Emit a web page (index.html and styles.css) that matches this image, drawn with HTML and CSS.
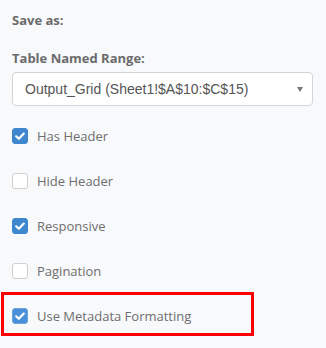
FILE: index.html
```html
<!DOCTYPE html>
<html>
<head>
<meta charset="utf-8">
<link rel="stylesheet" href="styles.css">
</head>
<body>
<div class="panel">
  <div class="heading save">Save as:</div>
  <div class="heading range">Table Named Range:</div>
  <div class="select">
    <span class="select-text">Output_Grid (Sheet1!$A$10:$C$15)</span>
    <span class="caret"></span>
  </div>
  <div class="options">
    <div class="row"><span class="box checked"><svg viewBox="0 0 16 16" width="16" height="16"><path d="M4.2 8.3 L6.8 10.8 L11.8 5.6" fill="none" stroke="#fff" stroke-width="2.2" stroke-linecap="round" stroke-linejoin="round"/></svg></span><span class="label">Has Header</span></div>
    <div class="row"><span class="box"></span><span class="label">Hide Header</span></div>
    <div class="row"><span class="box checked"><svg viewBox="0 0 16 16" width="16" height="16"><path d="M4.2 8.3 L6.8 10.8 L11.8 5.6" fill="none" stroke="#fff" stroke-width="2.2" stroke-linecap="round" stroke-linejoin="round"/></svg></span><span class="label">Responsive</span></div>
    <div class="row"><span class="box"></span><span class="label">Pagination</span></div>
  </div>
  <div class="highlight">
    <div class="row hl-row"><span class="box checked light"><svg viewBox="0 0 16 16" width="16" height="16"><path d="M4.2 8.3 L6.8 10.8 L11.8 5.6" fill="none" stroke="#fff" stroke-width="2.2" stroke-linecap="round" stroke-linejoin="round"/></svg></span><span class="label">Use Metadata Formatting</span></div>
  </div>
</div>
</body>
</html>
```
FILE: styles.css
```css
html, body {
  margin: 0;
  padding: 0;
  background: #f8f9fb;
}
body {
  width: 326px;
  height: 348px;
  overflow: hidden;
  font-family: "Open Sans", "Liberation Sans", sans-serif;
}
.panel {
  padding: 11px 13px 0 12px;
}
.heading {
  font-size: 13px;
  line-height: 18px;
  font-weight: 700;
  color: #6b6b6b;
}
.range {
  margin-top: 20px;
}
.select {
  margin-top: 5px;
  height: 32px;
  border: 1px solid #d4d4d4;
  border-radius: 4px;
  background: #fff;
  display: flex;
  align-items: center;
  justify-content: space-between;
  padding: 0 9px 0 12px;
}
.select-text {
  font-family: "Liberation Sans", Arial, sans-serif;
  font-size: 14px;
  color: #555;
}
.caret {
  width: 0;
  height: 0;
  border-left: 3px solid transparent;
  border-right: 3px solid transparent;
  border-top: 5px solid #777;
}
.options {
  margin-top: 22px;
  display: flex;
  flex-direction: column;
  gap: 29px;
}
.row {
  display: flex;
  align-items: center;
  height: 16px;
}
.box {
  width: 16px;
  height: 16px;
  box-sizing: border-box;
  border: 1px solid #cfcfcf;
  border-radius: 3px;
  background: #fff;
  flex: none;
  position: relative;
}
.box svg {
  position: absolute;
  left: -1px;
  top: -1px;
}
.box.checked {
  background: #3e87cf;
  border-color: #3e87cf;
}
.box.light {
  background: #4a90d6;
  border-color: #6aa3dc;
}
.label {
  margin-left: 9px;
  font-size: 13px;
  color: #6e6e6e;
}
.highlight {
  margin: 13px 0 0 -11px;
  width: 239px;
  border: 3px solid #ff0000;
  padding: 13px 0 9px 8px;
}
```
